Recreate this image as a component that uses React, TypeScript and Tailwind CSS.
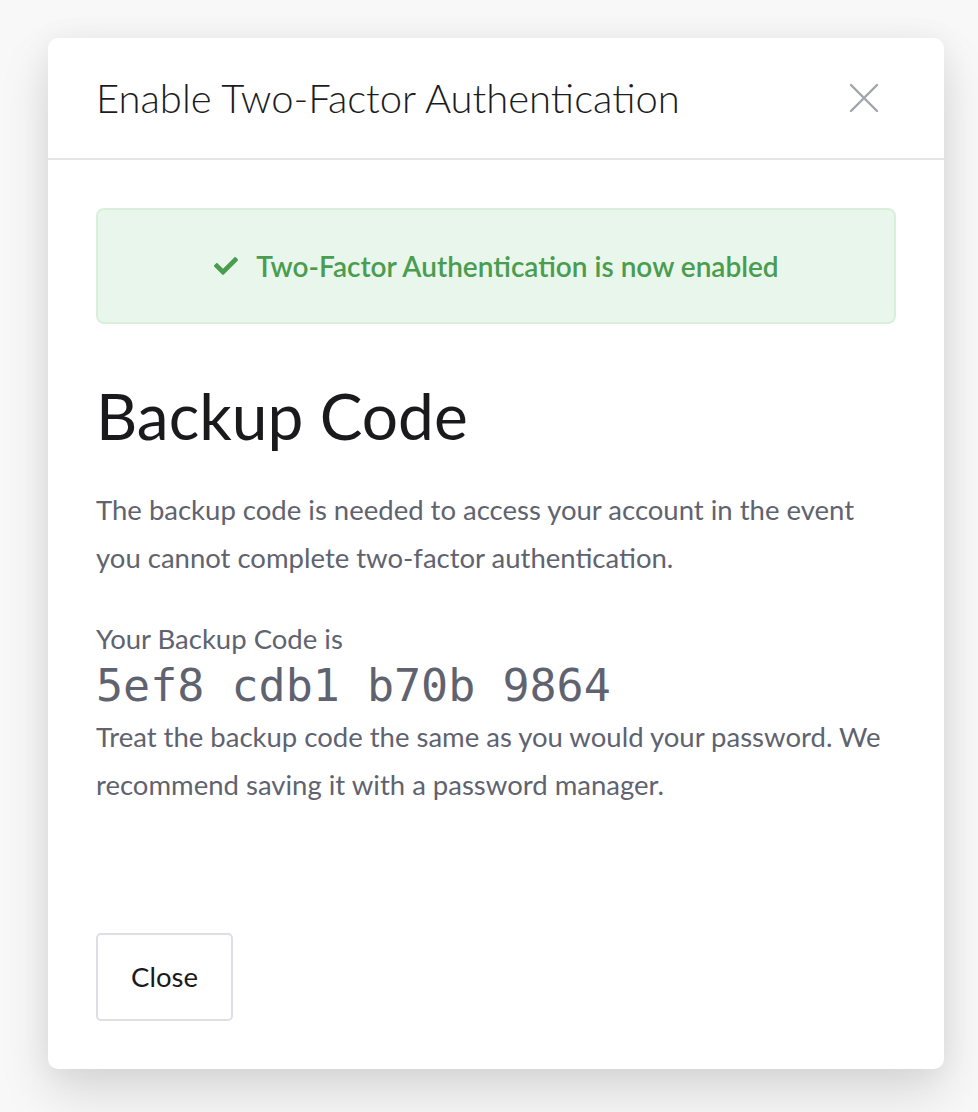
import React from "react";
import { FaCheck } from "react-icons/fa";

export default function App() {
  return (
    <div
      className="min-h-[1112px] w-full bg-[#f8f8f9] pt-[38px] pl-[48px]"
      style={{ fontFamily: "Lato, 'Noto Sans', sans-serif" }}
    >
      <div className="flex h-[1031px] w-[896px] flex-col rounded-[10px] bg-white shadow-[0_24px_50px_rgba(0,0,0,0.13),0_0_30px_rgba(0,0,0,0.05)]">
        <div className="flex h-[122px] items-center justify-between border-b-2 border-[#e6e6e8] pl-[48px] pr-[64px]">
          <h1 className="text-[40px] font-light text-[#1c1c1e]">Enable Two-Factor Authentication</h1>
          <svg width="32" height="32" viewBox="0 0 32 32" className="text-[#a2a4ac]">
            <path d="M3 3 L29 29 M29 3 L3 29" stroke="currentColor" strokeWidth="2.4" strokeLinecap="round" />
          </svg>
        </div>
        <div className="flex flex-1 flex-col px-[48px] pt-[48px] pb-[48px]">
          <div className="flex h-[116px] items-center justify-center gap-[17px] rounded-[8px] border-2 border-[#d9efdc] bg-[#e9f6eb] text-[#4a9c4f]">
            <FaCheck className="h-[24px] w-[26px]" />
            <span className="text-[28px] font-semibold">Two-Factor Authentication is now enabled</span>
          </div>
          <h2 className="mt-[52px] text-[64px] font-normal leading-[80px] text-[#1a1a1c]">Backup Code</h2>
          <p className="mt-[30px] text-[27.5px] leading-[48px] text-[#5f636f]">
            The backup code is needed to access your account in the event you cannot complete two-factor authentication.
          </p>
          <p className="mt-[41px] text-[27.5px] leading-[32px] text-[#5f636f]">Your Backup Code is</p>
          <div
            className="mt-[4px] text-[45px] leading-[54px] text-[#5f636f]"
            style={{ fontFamily: "'DejaVu Sans Mono', 'Liberation Mono', monospace" }}
          >
            5ef8 cdb1 b70b 9864
          </div>
          <p className="text-[27.5px] leading-[48px] text-[#5f636f]">
            Treat the backup code the same as you would your password. We recommend saving it with a password manager.
          </p>
          <div className="mt-auto">
            <button className="h-[88px] w-[137px] rounded-[5px] border-2 border-[#dedfe4] bg-white text-[27.5px] text-[#1a1a1c]">
              Close
            </button>
          </div>
        </div>
      </div>
    </div>
  );
}
